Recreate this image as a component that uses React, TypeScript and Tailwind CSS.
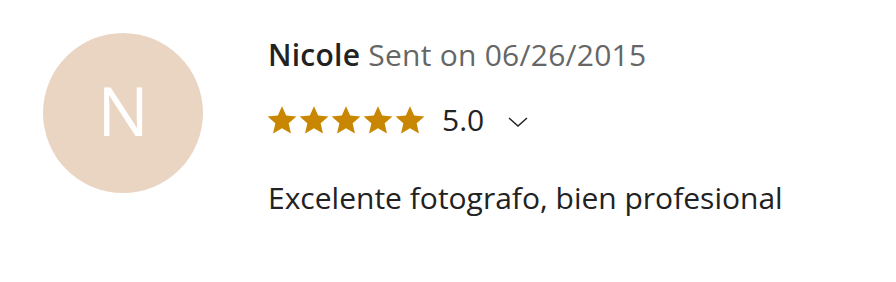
import React from "react";

function Star() {
  return (
    <svg viewBox="0 0 24 24" className="w-[32px] h-[32px]" fill="#c98600">
      <path d="M12 1.6l3.1 7.1 7.7.7-5.8 5.1 1.7 7.6L12 18.1l-6.7 4 1.7-7.6L1.2 9.4l7.7-.7z" />
    </svg>
  );
}

export default function App() {
  return (
    <div
      className="w-[896px] h-[282px] bg-white flex gap-[65px] pl-[43px] pt-[33px]"
      style={{ fontFamily: "'Open Sans', 'Liberation Sans', sans-serif" }}
    >
      <div className="w-[160px] h-[160px] shrink-0 rounded-full bg-[#ead5c2] flex items-center justify-center pb-[6px] text-white text-[68px] leading-[70px]">
        N
      </div>
      <div className="flex flex-col pt-[2px]">
        <p className="text-[30px] leading-[40px] tracking-[0.25px] text-[#666]">
          <span className="font-semibold text-[#222]">Nicole</span> Sent on 06/26/2015
        </p>
        <div className="flex items-center h-[40px] mt-[25px]">
          <div className="flex -ml-[2px]">
            <Star />
            <Star />
            <Star />
            <Star />
            <Star />
          </div>
          <span className="ml-[16px] text-[30px] text-[#222] leading-[40px]">5.0</span>
          <svg viewBox="0 0 20 10" className="ml-[24px] mt-[3px] w-[20px] h-[10px]" fill="none" stroke="#222" strokeWidth="1.5">
            <path d="M1 1l9 8 9-8" />
          </svg>
        </div>
        <p className="mt-[38px] text-[30px] leading-[40px] text-[#222]">
          Excelente fotografo, bien profesional
        </p>
      </div>
    </div>
  );
}
